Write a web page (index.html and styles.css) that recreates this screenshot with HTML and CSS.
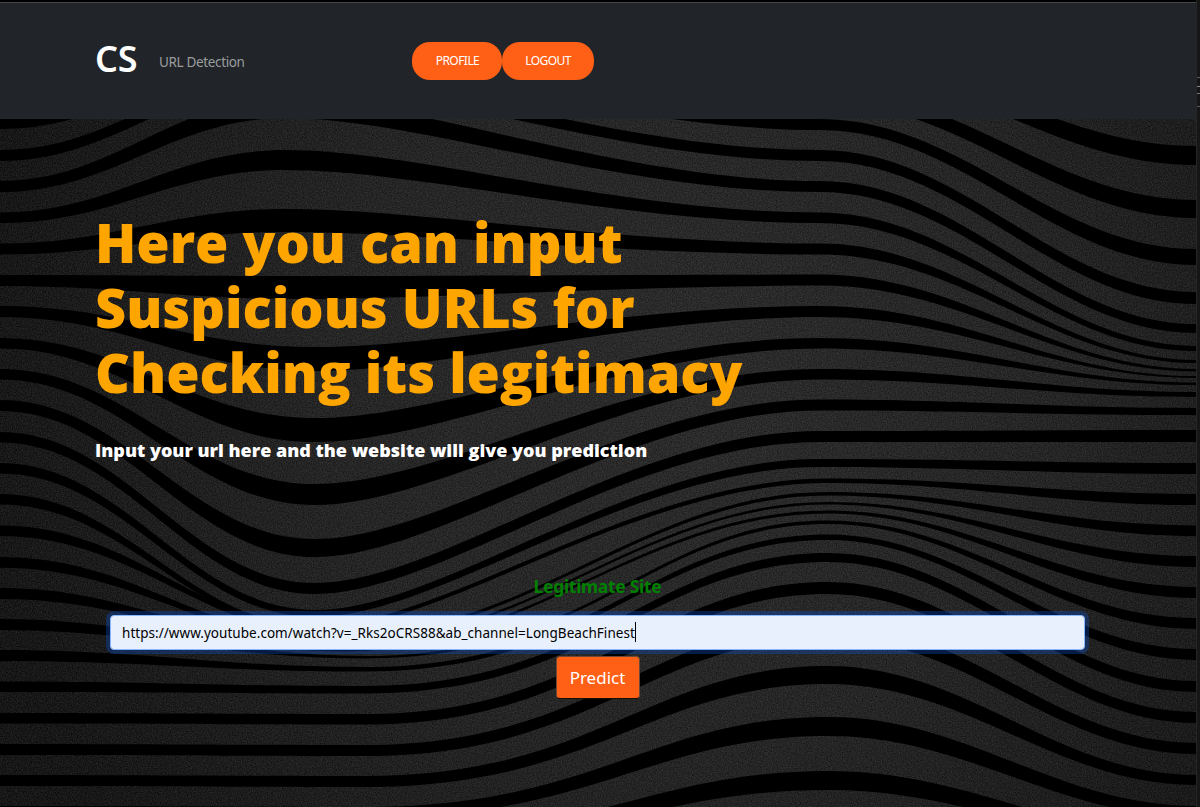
FILE: index.html
```html
<!DOCTYPE html>
<html lang="en">
<head>
<meta charset="utf-8">
<title>URL Detection</title>
<link rel="stylesheet" href="styles.css">
</head>
<body>
<div class="page">
  <div class="view">
    <header class="navbar">
      <div class="brand">CS</div>
      <div class="tagline">URL Detection</div>
      <nav class="actions">
        <a class="pill pill-profile"><span>PROFILE</span></a>
        <a class="pill pill-logout"><span>LOGOUT</span></a>
      </nav>
    </header>
    <main class="hero">
      <svg class="waves" viewBox="0 119 1196 688" width="1196" height="688" aria-hidden="true">
        <defs>
          <radialGradient id="glow" gradientUnits="userSpaceOnUse" cx="690" cy="390" r="720">
            <stop offset="0" stop-color="#323232"/>
            <stop offset=".5" stop-color="#282828"/>
            <stop offset="1" stop-color="#101010"/>
          </radialGradient>
          <filter id="grain" x="0" y="0" width="100%" height="100%" color-interpolation-filters="sRGB">
            <feTurbulence type="fractalNoise" baseFrequency=".8" numOctaves="2" seed="4"/>
            <feColorMatrix values=".45 0 0 0 -.09  .45 0 0 0 -.09  .45 0 0 0 -.09  0 0 0 0 .4"/>
          </filter>
        </defs>
        <rect y="119" width="1196" height="688" fill="url(#glow)"/>
        <rect y="119" width="1196" height="688" filter="url(#grain)"/>
        <g id="bands"></g>
      </svg>
      <div class="content">
        <h1>Here you can input<br>Suspicious URLs for<br>Checking its legitimacy</h1>
        <p class="lead">Input your url here and the website will give you prediction</p>
        <div class="result">Legitimate Site</div>
        <div class="field"><span class="url">https://www.youtube.com/watch?v=_Rks2oCRS88&amp;ab_channel=LongBeachFinest</span><i class="caret"></i></div>
        <a class="predict">Predict</a>
      </div>
    </main>
  </div>
  <div class="gutter"><i class="m1"></i><i class="m2"></i><i class="m3"></i><i class="m4"></i></div>
</div>
<script src="waves.js"></script>
</body>
</html>
```
FILE: styles.css
```css
* { box-sizing: border-box; }
body { margin: 0; background: #000; font-family: "Open Sans", "Noto Sans", sans-serif; }
.page { display: flex; width: 1200px; height: 807px; overflow: hidden; }
.view { width: 1196px; border-top: 2px solid #000; }
.gutter { width: 4px; background: #161616; border-left: 1px solid #272525; padding-top: 77px; }
.gutter i { display: block; height: 1px; background: #5a5a5a; }
.gutter .m2 { margin-top: 8px; background: #8a8a8a; }
.gutter .m3 { margin-top: 6px; background: #777; }
.gutter .m4 { margin-top: 12px; }
.navbar { display: flex; align-items: flex-start; height: 117px; border-top: 1px solid #454545; background: #212529; padding-left: 95px; }
.brand { width: 64px; padding-top: 32px; color: #fff; font: 600 36px/48px "Noto Sans", sans-serif; letter-spacing: -.2px; }
.tagline { width: 253px; padding-top: 49px; color: #9a9c9e; font: 13.5px/20px "Noto Sans", sans-serif; letter-spacing: -.35px; }
.actions { display: flex; padding-top: 39px; }
.pill { display: flex; align-items: center; justify-content: center; height: 38px; border-radius: 18px; background: #ff6015; color: #fff; font: 12px/18px "Noto Sans", sans-serif; letter-spacing: -.55px; }
.pill-profile { width: 90px; padding-left: 1px; }
.pill-logout { width: 92px; }
.hero { display: grid; height: 688px; }
.waves, .content { grid-area: 1 / 1; }
.waves { display: block; }
.content { position: relative; display: flex; flex-direction: column; padding: 91px 95px 0; }
h1 { margin: 0; color: orange; font-size: 54px; line-height: 65px; font-weight: 800; white-space: nowrap; }
.lead { margin: 32px 0 0; color: #fff; font-size: 18px; line-height: 26px; font-weight: 800; white-space: nowrap; }
.result { align-self: center; margin: 110px 1px 0 0; color: green; font: 700 17.5px/26px "Noto Sans", sans-serif; letter-spacing: -.3px; }
.field { display: flex; align-items: center; height: 35px; margin: 16px 16px 0 15px; padding-left: 11px; border: 1px solid #86b7fe; border-radius: 4px; background: #e8f0fe; box-shadow: 0 0 0 4px rgba(13, 80, 200, .35); color: #000; font: 13.5px/20px "Noto Sans", sans-serif; letter-spacing: .04px; }
.caret { width: 1px; height: 20px; margin-top: -2px; background: #000; }
.predict { align-self: center; display: flex; align-items: center; justify-content: center; width: 84px; height: 43px; margin: 6px 1px 0 0; padding-top: 1px; border: 1px solid #6b4a38; border-bottom-color: #1a0d05; border-radius: 4px; background: #ff6015; color: #fff; font: 17px/26px "Noto Sans", sans-serif; }
```
FILE: waves.js
```js
// Each row: top and bottom of a band at the left edge, trough/crest, right crest and right edge.
const rows = [
  [56,67, 0,10, 54,69, 146,165],
  [88,99, 20,32, 89,102, 200,218],
  [118.5,129, 46,57, 119,130, 249,265],
  [150,161, 72,83, 150,161, 292,304],
  [181,192, 99,118, 181,192, 324,333],
  [212.4,223, 150,170, 212.4,223, 346,351],
  [243.6,254.5, 209,232, 243.6,254.5, 360,363],
  [275,286, 276,299, 274.6,285.6, 369,371.4],
  [306,317, 347,371, 306,317, 376,378],
  [338,348.5, 418,442, 338,348.5, 382.6,385],
  [369,379.5, 484,505, 369,379.5, 392,397],
  [400,411, 539,557, 399.5,410.5, 408,415],
  [432,442.5, 583,594, 431,442, 430,442],
  [463,473.5, 610,617, 459,467, 463,474],
  [494,504.5, 626,630, 478.5,483, 494,505],
  [525.5,536, 635,638, 492,495.5, 525.5,536],
  [557,567.7, 642,644.5, 502,504.5, 556,567],
  [588,599, 649,651.5, 510.5,513.5, 587,598],
  [619,630, 656,658.5, 520.5,524, 618,629],
  [650,661, 667,671.5, 534.5,540, 649,660],
  [681.5,692, 686,693.5, 553,562, 681,692],
  [713,723.5, 714,724.5, 582,594, 712,723],
  [744,755, 745,756, 623,638, 743,754],
  [775,786, 776,787, 666,684, 775,785],
  [806,817, 807,818, 717,736, 806,817],
  [837,848, 838,849, 771,790, 837,848]
];

function band(r, i) {
  const k = i - 2;
  const mx = k <= 4 ? 285 : k <= 5 ? 300 : k <= 12 ? 315 : k <= 15 ? 345 : 365;
  const a = k <= 12 ? .25 : k <= 15 ? .38 : .5;
  const rx = k < 12 ? 820 : 828;
  const l1 = mx * .4, m = (rx - mx) * a, n = (rx - mx) * .38, e = (1196 - rx) * .38;
  const [l, lb, c, cb, h, hb, z, zb] = r;
  return `M0 ${l}C${l1} ${l} ${mx - l1} ${c} ${mx} ${c}C${mx + m} ${c} ${rx - n} ${h} ${rx} ${h}` +
    `C${rx + e} ${h} ${1196 - e} ${z} 1196 ${z}V${zb}C${1196 - e} ${zb} ${rx + e} ${hb} ${rx} ${hb}` +
    `C${rx - n} ${hb} ${mx + m} ${cb} ${mx} ${cb}C${mx - l1} ${cb} ${l1} ${lb} 0 ${lb}Z`;
}

const group = document.getElementById("bands");
rows.forEach((r, i) => {
  const path = document.createElementNS("http://www.w3.org/2000/svg", "path");
  path.setAttribute("d", band(r, i));
  group.appendChild(path);
});
```
